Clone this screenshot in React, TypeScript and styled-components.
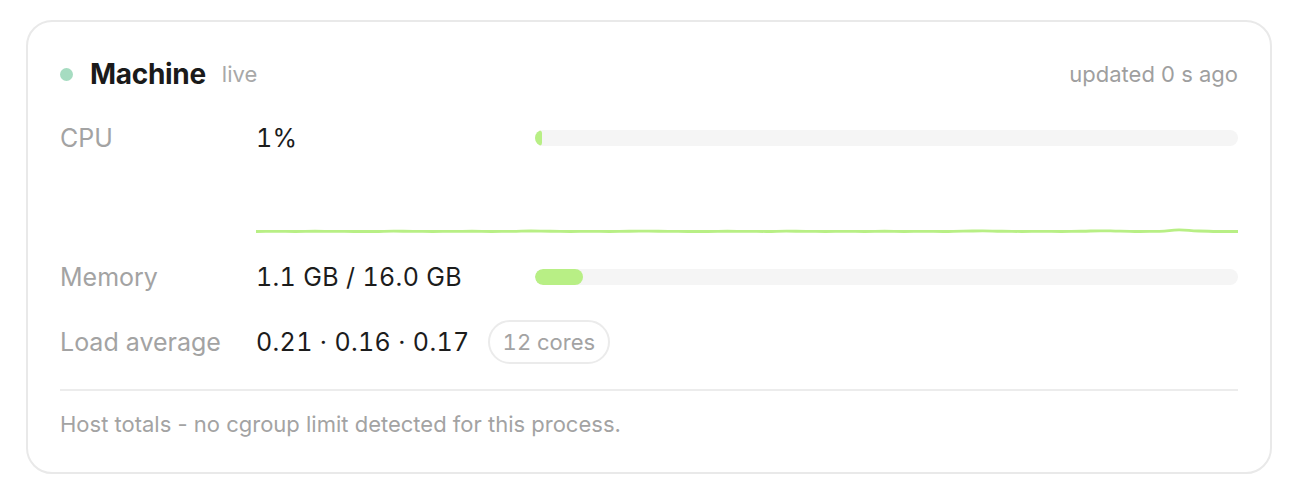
import React from "react";
import styled, { createGlobalStyle } from "styled-components";

const Global = createGlobalStyle`
  html, body { margin: 0; padding: 0; background: #ffffff; }
  body { font-family: Inter, "Noto Sans", "Liberation Sans", sans-serif; -webkit-font-smoothing: antialiased; }
`;

const Page = styled.div`
  padding: 20px 28px 8px 26px;
`;

const Card = styled.section`
  box-sizing: border-box;
  border: 2px solid #e9e9e9;
  border-radius: 26px;
  padding: 36px 32px 34px 32px;
  background: #fff;
`;

const Header = styled.header`
  display: flex;
  align-items: center;
  height: 32px;
`;

const Dot = styled.span`
  width: 13px;
  height: 13px;
  border-radius: 50%;
  background: #a6dcc1;
  margin-right: 17px;
`;

const Title = styled.h2`
  margin: 0;
  font-size: 28px;
  font-weight: 700;
  color: #1a1a1a;
  letter-spacing: -0.3px;
`;

const Live = styled.span`
  margin-left: 16px;
  font-size: 22px;
  color: #a8a8a8;
`;

const Updated = styled.span`
  margin-left: auto;
  font-size: 22px;
  color: #9f9f9f;
`;

const Grid = styled.div`
  display: grid;
  grid-template-columns: 196px 279px 1fr;
  align-items: center;
`;

const Label = styled.div<{ $top: number; $h: number }>`
  margin-top: ${(p) => p.$top}px;
  height: ${(p) => p.$h}px;
  display: flex;
  align-items: center;
  font-size: 25px;
  color: #a3a3a3;
`;

const Value = styled.div<{ $top: number; $h: number; $span?: boolean }>`
  margin-top: ${(p) => p.$top}px;
  height: ${(p) => p.$h}px;
  display: flex;
  align-items: center;
  gap: 18px;
  font-size: 25px;
  color: #1c1c1c;
  font-feature-settings: "tnum" 1;
  letter-spacing: 0.35px;
  grid-column: ${(p) => (p.$span ? "2 / 4" : "auto")};
`;

const BarCell = styled.div<{ $top: number; $h: number }>`
  margin-top: ${(p) => p.$top}px;
  height: ${(p) => p.$h}px;
  display: flex;
  align-items: center;
`;

const Track = styled.div`
  width: 100%;
  height: 16px;
  border-radius: 8px;
  background: #f5f5f5;
  overflow: hidden;
`;

const Fill = styled.div`
  height: 100%;
  border-radius: 8px;
  background: #b8ef85;
`;

const Spark = styled.div`
  grid-column: 2 / 4;
  margin-top: 8px;
  height: 72px;
`;

const Chip = styled.span`
  display: inline-flex;
  align-items: center;
  box-sizing: border-box;
  height: 44px;
  padding: 0 13px;
  border: 2px solid #ebebeb;
  border-radius: 22px;
  font-size: 22px;
  letter-spacing: 0;
  color: #a3a3a3;
`;

const Divider = styled.hr`
  margin: 25px 0 0 0;
  border: none;
  border-top: 2px solid #ececec;
`;

const Footer = styled.p`
  margin: 19px 0 0 0;
  line-height: 28px;
  font-size: 22px;
  color: #a3a3a3;
`;

const sparkData = [
  1.0, 1.1, 1.0, 1.2, 1.1, 1.0, 1.0, 1.3, 1.1, 1.0, 1.1, 1.2, 1.0, 1.1, 1.4, 1.2,
  1.0, 1.1, 1.0, 1.2, 1.3, 1.1, 1.0, 1.0, 1.2, 1.1, 1.0, 1.3, 1.1, 1.0, 1.1, 1.0,
  1.2, 1.0, 1.1, 1.0, 1.3, 1.5, 1.2, 1.0, 1.1, 1.0, 1.2, 1.6, 1.3, 1.0, 1.1, 2.4,
  1.4, 1.0, 1.0,
];

function Sparkline() {
  const w = 982;
  const h = 72;
  const base = 69.5;
  const step = w / (sparkData.length - 1);
  const pts = sparkData.map((v, i) => [i * step, base - (v - 1) * 1.2]);
  let d = `M${pts[0][0]},${pts[0][1]}`;
  for (let i = 1; i < pts.length; i++) {
    const [x0, y0] = pts[i - 1];
    const [x1, y1] = pts[i];
    const cx = (x0 + x1) / 2;
    d += ` C${cx},${y0} ${cx},${y1} ${x1},${y1}`;
  }
  return (
    <svg width="100%" height={h} viewBox={`0 0 ${w} ${h}`} preserveAspectRatio="none">
      <path d={d} fill="none" stroke="#b8ef85" strokeWidth="2.8" strokeLinecap="round" />
    </svg>
  );
}

export default function App() {
  const cpu = 1;
  const memPct = (1.1 / 16) * 100;
  return (
    <Page>
      <Global />
      <Card>
        <Header>
          <Dot />
          <Title>Machine</Title>
          <Live>live</Live>
          <Updated>updated 0 s ago</Updated>
        </Header>
        <Grid>
          <Label $top={32} $h={32}>CPU</Label>
          <Value $top={32} $h={32}>1%</Value>
          <BarCell $top={32} $h={32}>
            <Track>
              <Fill style={{ width: `${cpu}%` }} />
            </Track>
          </BarCell>
          <div />
          <Spark>
            <Sparkline />
          </Spark>
          <Label $top={27} $h={32}>Memory</Label>
          <Value $top={27} $h={32}>1.1 GB / 16.0 GB</Value>
          <BarCell $top={27} $h={32}>
            <Track>
              <Fill style={{ width: `${memPct}%` }} />
            </Track>
          </BarCell>
          <Label $top={27} $h={44}>Load average</Label>
          <Value $top={27} $h={44} $span>
            0.21 · 0.16 · 0.17
            <Chip>12 cores</Chip>
          </Value>
        </Grid>
        <Divider />
        <Footer>Host totals - no cgroup limit detected for this process.</Footer>
      </Card>
    </Page>
  );
}
